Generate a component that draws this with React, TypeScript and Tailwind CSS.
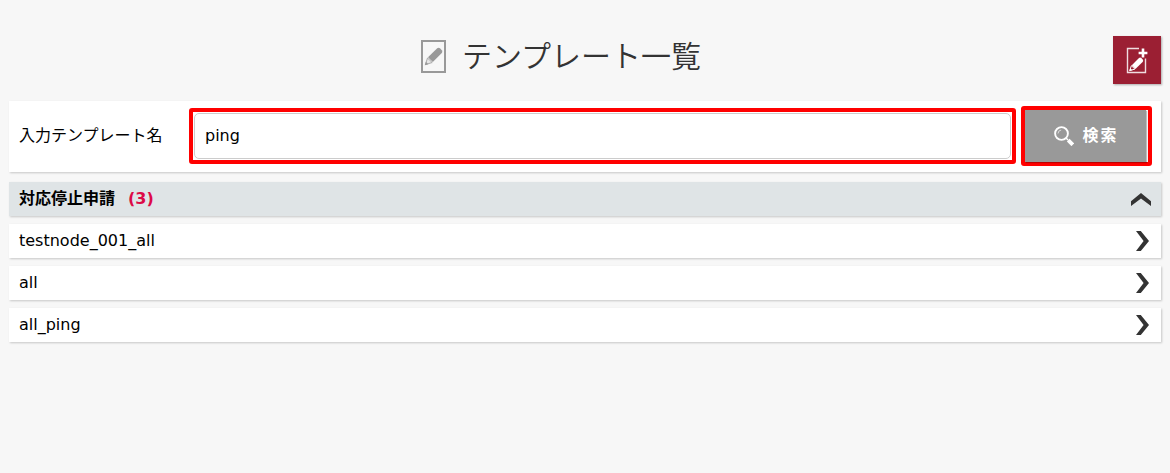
import { useState } from "react";

const templates = ["testnode_001_all", "all", "all_ping"];

function PageIcon() {
  return (
    <svg className="h-[33px] w-[25px] shrink-0" viewBox="0 0 25 33" aria-hidden="true">
      <rect x="1" y="1" width="23" height="31" fill="none" stroke="#999" strokeWidth="2" />
      <path d="M7 17.2 16.2 8.3Q17.6 7 19 8.3L20.8 10.2Q22 11.6 20.8 13L11.8 22Z" fill="#999" />
      <path d="M6.5 18 4.4 24.6 11.2 22.5Z" fill="#e6e6e6" stroke="#aaa" strokeWidth="1" />
      <path d="M3.8 25.2 4.9 21.8 7.4 24.2Z" fill="#999" />
    </svg>
  );
}

function NewPageIcon() {
  return (
    <svg className="h-[27px] w-[22px]" viewBox="0 0 22 27" aria-hidden="true">
      <path d="M13 1.5H1.5V25.5H19.5V11.5" fill="none" stroke="#fff" strokeOpacity="0.85" strokeWidth="1.4" />
      <path d="M15.7 1.6H18.3V4.7H21.4V7.3H18.3V10.4H15.7V7.3H12.6V4.7H15.7Z" fill="#fff" />
      <path d="M5.8 18.2 13 11Q14.2 10 15.4 11.1L16.7 12.4Q17.8 13.8 16.6 15L9.4 22Z" fill="#fff" />
      <path d="M5.4 18.7 3.7 23.6 8.9 22.1Z" fill="none" stroke="#fff" strokeWidth="1" />
      <path d="M3.3 24.1 4.3 21.2 6.3 23.3Z" fill="#fff" />
    </svg>
  );
}

function SearchIcon() {
  return (
    <svg className="size-5" viewBox="0 0 20 20" aria-hidden="true">
      <circle cx="7.5" cy="7.5" r="6.4" fill="none" stroke="#fff" strokeWidth="1.9" />
      <path d="M4 7.5Q4.2 4.4 7.2 4" fill="none" stroke="#ddd" strokeWidth="1" />
      <path d="M12 12 14 14" stroke="#fff" strokeWidth="1.5" />
      <path d="M14.2 14.2 18.8 18.8" stroke="#fff" strokeWidth="3.8" />
    </svg>
  );
}

function ChevronUp() {
  return (
    <svg className="h-[13px] w-5" viewBox="0 0 20 13" aria-hidden="true">
      <path d="M0 8.2 10 0 20 8.2V13L10 5.4 0 13Z" fill="#333" />
    </svg>
  );
}

function ChevronRight() {
  return (
    <svg className="mr-0.5 h-5 w-[13px]" viewBox="0 0 13 20" aria-hidden="true">
      <path d="M0 0H4.8L13 10 4.8 20H0L7.6 10Z" fill="#333" />
    </svg>
  );
}

export default function App() {
  const [name, setName] = useState("ping");
  const [open, setOpen] = useState(true);

  return (
    <main className="min-h-screen bg-[#f7f7f7] px-[9px] pt-9 font-['DejaVu_Sans','Noto_Sans_CJK_JP',sans-serif] text-base text-black">
      <header className="flex h-12 items-start">
        <h1 className="flex flex-1 items-center justify-center gap-4 pt-1 text-[30px] leading-8 font-[350] text-[#333]">
          <PageIcon />
          テンプレート一覧
        </h1>
        <button
          type="button"
          aria-label="新規作成"
          className="flex size-12 items-center justify-center bg-[#9b1f33] shadow-[1px_1px_2px_#0000004d]"
        >
          <NewPageIcon />
        </button>
      </header>

      <form
        onSubmit={(e) => e.preventDefault()}
        className="mt-[17px] flex items-center bg-white pt-[5px] pr-[9px] pb-1.5 pl-2.5 shadow-[1px_1px_2px_#00000033]"
      >
        <label htmlFor="template-name" className="w-[170px] shrink-0">
          入力テンプレート名
        </label>
        <div className="flex-1 rounded-[3px] border-4 border-[#f00] p-px">
          <input
            id="template-name"
            type="text"
            value={name}
            onChange={(e) => setName(e.target.value)}
            className="block h-[46px] w-full rounded-[5px] border border-[#ccc] bg-white px-2.5 pb-0.5 outline-none"
          />
        </div>
        <div className="ml-[5px] rounded-[3px] border-4 border-[#f00] pr-0.5">
          <button
            type="submit"
            className="flex h-[52px] w-[121px] items-center justify-center gap-2 bg-[#999] pl-0.5 font-bold tracking-[2px] text-white shadow-[1px_1px_1px_#00000040]"
          >
            <SearchIcon />
            検索
          </button>
        </div>
      </form>

      <section className="mt-2.5">
        <h2>
          <button
            type="button"
            aria-expanded={open}
            onClick={() => setOpen(!open)}
            className="flex h-[34px] w-full items-center bg-[#dfe4e6] px-2.5 font-bold shadow-[1px_1px_2px_#00000033]"
          >
            対応停止申請
            <span className="ml-[13px] flex-1 text-left text-[#dc0a46]">(3)</span>
            <ChevronUp />
          </button>
        </h2>
        {open && (
          <ul className="mt-2 flex flex-col gap-2">
            {templates.map((template) => (
              <li key={template}>
                <a
                  href="#"
                  className="flex h-[34px] items-center justify-between bg-white px-2.5 shadow-[1px_1px_2px_#00000033]"
                >
                  {template}
                  <ChevronRight />
                </a>
              </li>
            ))}
          </ul>
        )}
      </section>
    </main>
  );
}
